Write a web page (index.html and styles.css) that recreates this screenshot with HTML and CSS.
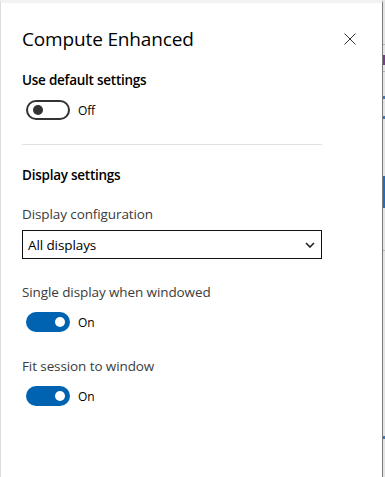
FILE: index.html
```html
<!DOCTYPE html>
<html lang="en">

<head>
    <meta charset="UTF-8">
    <meta name="viewport" content="width=device-width, initial-scale=1.0">
    <title>Compute Enhanced</title>
    <link rel="stylesheet" href="styles.css">
</head>

<body>

    <div class="page">
        <div class="panel">
            <div class="header">
                <h1>Compute Enhanced</h1>
                <button class="closeButton" aria-label="Close">
                    <svg width="12" height="12" viewBox="0 0 12 12">
                        <path d="M0.5 0.5 L11.5 11.5 M11.5 0.5 L0.5 11.5" stroke="#333" stroke-width="1" fill="none" />
                    </svg>
                </button>
            </div>

            <h2 class="sectionTitle">Use default settings</h2>
            <div class="toggleRow">
                <span class="toggle toggleOff"><span class="knob"></span></span>
                <span class="toggleText">Off</span>
            </div>

            <div class="divider"></div>

            <h2 class="sectionTitle sectionDisplay">Display settings</h2>

            <div class="fieldLabel">Display configuration</div>
            <div class="select">
                <span>All displays</span>
                <svg width="10" height="6" viewBox="0 0 10 6">
                    <path d="M1 1 L5 5 L9 1" stroke="#222" stroke-width="1.6" fill="none" />
                </svg>
            </div>

            <div class="fieldLabel labelSingle">Single display when windowed</div>
            <div class="toggleRow">
                <span class="toggle toggleOn"><span class="knob"></span></span>
                <span class="toggleText">On</span>
            </div>

            <div class="fieldLabel labelFit">Fit session to window</div>
            <div class="toggleRow">
                <span class="toggle toggleOn"><span class="knob"></span></span>
                <span class="toggleText">On</span>
            </div>
        </div>

        <div class="behind">
            <div class="mark markLine" style="margin-top: 44px"></div>
            <div class="mark markPurple" style="margin-top: 10px"></div>
            <div class="mark markLine" style="margin-top: 6px"></div>
            <div class="mark markBlue" style="margin-top: 24px"></div>
            <div class="mark markBlue" style="margin-top: 17px"></div>
            <div class="mark markBlock" style="margin-top: 57px"></div>
            <div class="mark markLine" style="margin-top: 42px"></div>
            <div class="mark markBlue" style="margin-top: 185px"></div>
        </div>
    </div>

</body>

</html>
```

FILE: styles.css
```css
body {
    margin: 0;
    background: #ffffff;
    font-family: 'Open Sans', sans-serif;
    color: #000;
}

.page {
    display: flex;
    height: 477px;
}

.panel {
    width: 383px;
    flex-shrink: 0;
    border-left: 1px solid #dcdcdc;
    border-right: 1px solid #7a7a7a;
    border-top: 3px solid #f2f2f2;
    padding: 0 0 0 21px;
    box-sizing: border-box;
    background: #fff;
}

.header {
    display: flex;
    justify-content: space-between;
    align-items: center;
    width: 334px;
    margin-top: 23px;
}

.header h1 {
    margin: 0;
    font-size: 19px;
    font-weight: 400;
    line-height: 26px;
    letter-spacing: -0.15px;
}

.closeButton {
    border: 0;
    background: none;
    padding: 0;
    width: 12px;
    height: 12px;
    display: flex;
}

.sectionTitle {
    margin: 18px 0 0;
    font-size: 13.5px;
    font-weight: 600;
    line-height: 20px;
    letter-spacing: -0.25px;
}

.sectionDisplay {
    margin-top: 20px;
}

.toggleRow {
    display: flex;
    align-items: center;
    margin-top: 10px;
    padding-left: 4px;
    gap: 8px;
}

.toggle {
    width: 44px;
    height: 20px;
    border-radius: 10px;
    box-sizing: border-box;
    display: flex;
    align-items: center;
}

.toggleOff {
    border: 2px solid #333;
    padding-left: 5px;
}

.toggleOff .knob {
    width: 10px;
    height: 10px;
    border-radius: 50%;
    background: #333;
}

.toggleOn {
    background: #0063b1;
    justify-content: flex-end;
    padding-right: 5px;
}

.toggleOn .knob {
    width: 10px;
    height: 10px;
    border-radius: 50%;
    background: #fff;
}

.toggleText {
    font-size: 12px;
    letter-spacing: -0.2px;
}

.divider {
    width: 300px;
    height: 1px;
    background: #e1e1e1;
    margin-top: 24px;
}

.fieldLabel {
    font-size: 13.5px;
    color: #3b3b3b;
    line-height: 20px;
    letter-spacing: -0.1px;
    margin-top: 19px;
}

.select {
    width: 300px;
    height: 29px;
    border: 1px solid #111;
    box-sizing: border-box;
    margin-top: 6px;
    display: flex;
    align-items: center;
    justify-content: space-between;
    padding: 0 6px 0 5px;
    font-size: 13.5px;
    letter-spacing: -0.1px;
}

.labelSingle {
    margin-top: 23px;
}

.labelFit {
    margin-top: 24px;
}

.behind {
    width: 2px;
    background: #e4e4e4;
    display: flex;
    flex-direction: column;
}

.mark {
    width: 2px;
}

.markLine {
    height: 1px;
    background: #b5b5b5;
}

.markPurple {
    height: 10px;
    background: #7a3d8c;
}

.markBlue {
    height: 3px;
    background: #3a78c0;
}

.markBlock {
    height: 32px;
    background: #1f6fc0;
}
```
